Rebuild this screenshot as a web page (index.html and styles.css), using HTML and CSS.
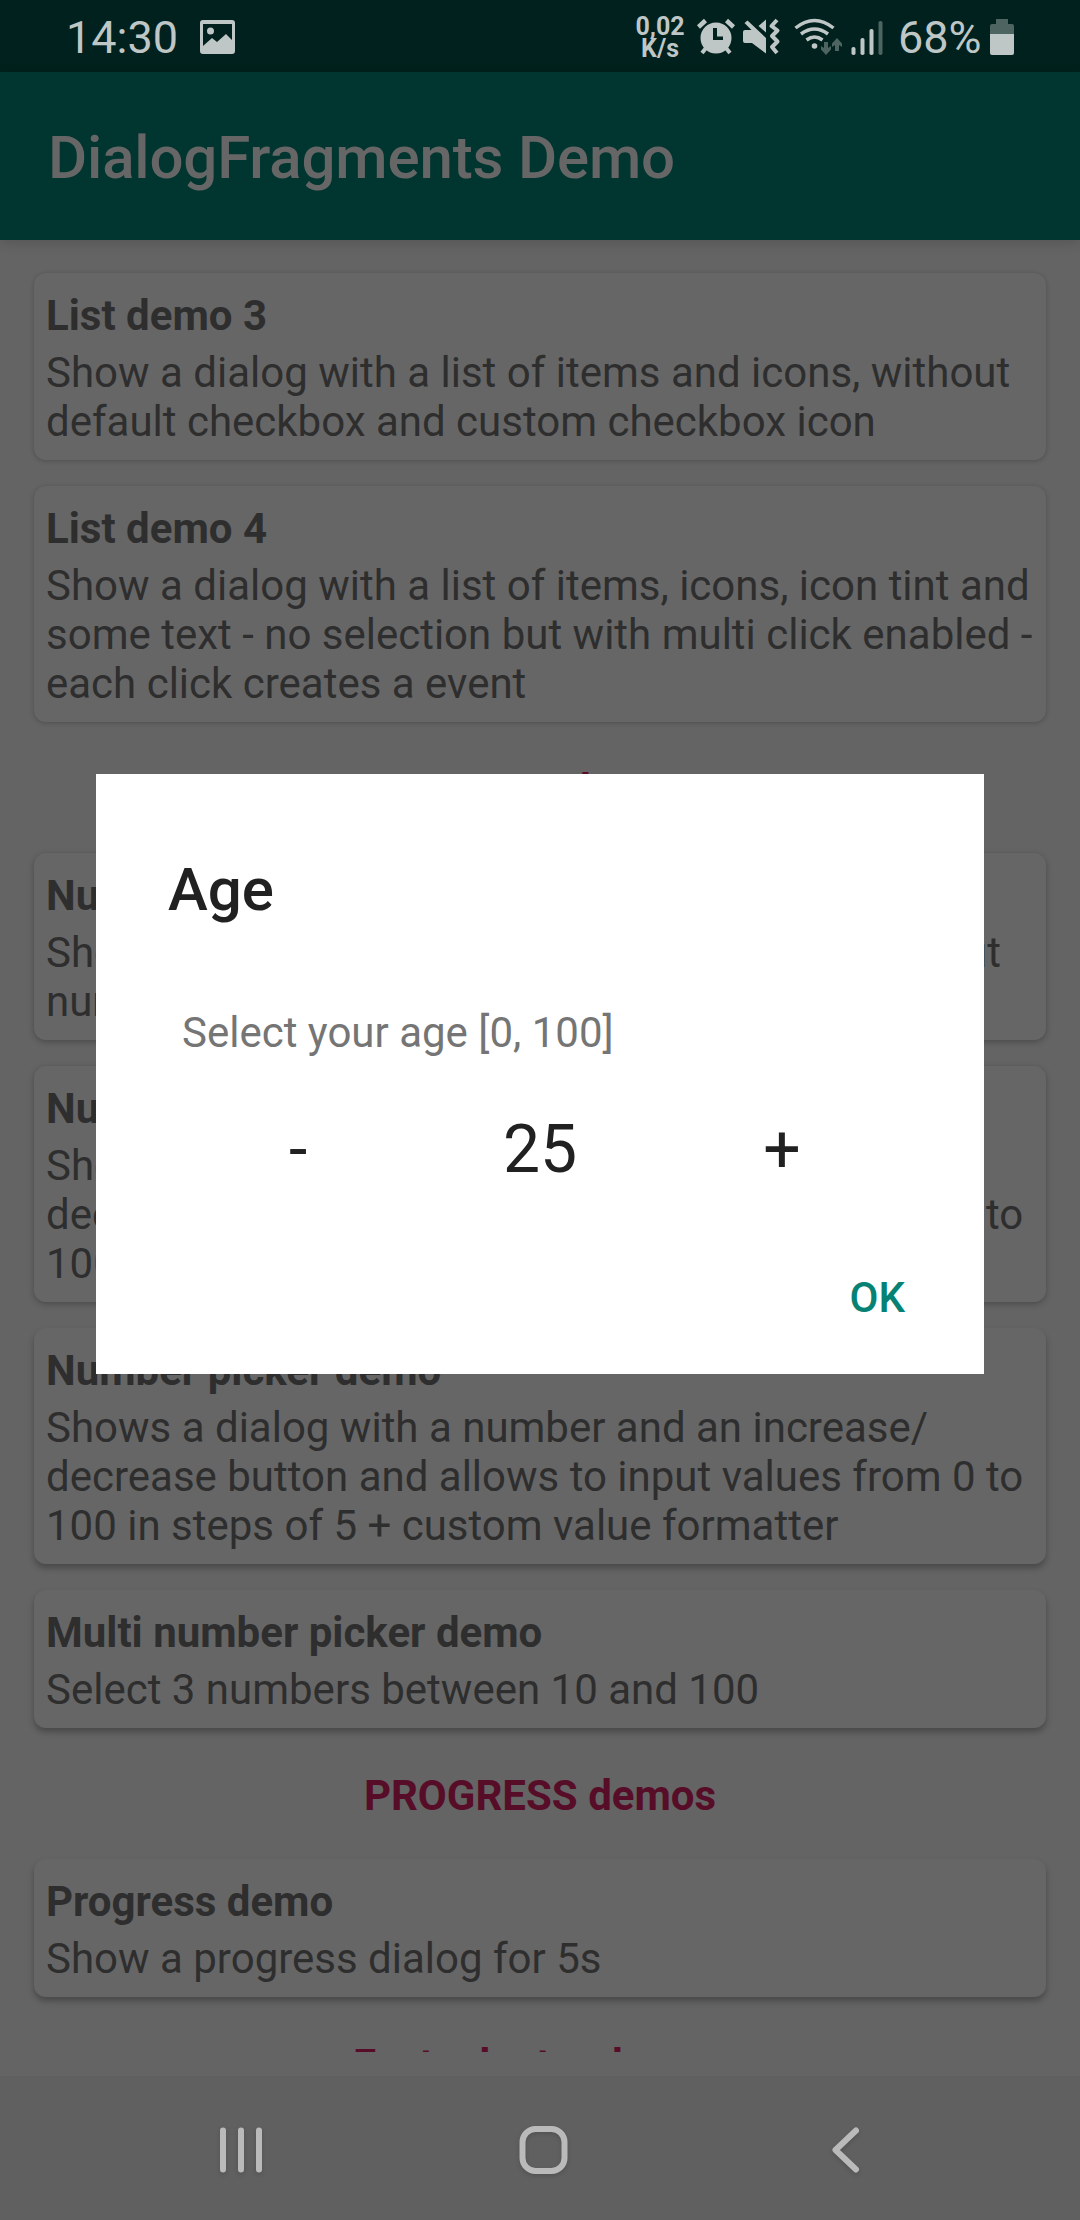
FILE: index.html
```html
<!DOCTYPE html>
<html lang="en">
<head>
<meta charset="utf-8">
<title>DialogFragments Demo</title>
<link rel="stylesheet" href="styles.css">
</head>
<body>
<div class="screen">
  <header class="status-bar">
    <div class="status-left">
      <span class="clock">14:30</span>
      <svg class="icon-picture" width="36" height="34" viewBox="0 0 36 34"><path fill="#bfc7c6" fill-rule="evenodd" d="M3 0H32Q35 0 35 3V31Q35 34 32 34H3Q0 34 0 31V3Q0 0 3 0ZM3 4V26L12 18L17 22L26 14L32 20V4ZM10.500 7.500a3.500 3.500 0 1 1 0 7a3.500 3.500 0 1 1 0-7Z"/></svg>
    </div>
    <div class="status-right">
      <div class="speed"><span>0,02</span><span>K/s</span></div>
      <svg class="icon-system" width="280" height="40" viewBox="690 16 280 40">
        <g fill="none" stroke="#bfc7c6">
          <path stroke-width="4.500" d="M698.500 27L705.500 20.500M733.500 27L726.500 20.500"/>
          <path stroke-width="4" d="M706 48L702 53M726 48L730 53"/>
          <path stroke-width="4" stroke-linejoin="round" d="M777 20L771.500 26L777.500 30.500L772 36L777.500 41.500L772 47L777 53"/>
          <path stroke-width="3.500" d="M795.500 28Q814.500 13 833.500 28M801 34Q814.500 24 828 34M806.500 40Q814.500 34 822.500 40"/>
        </g>
        <g fill="#bfc7c6">
          <path fill-rule="evenodd" d="M716 22.500a15.500 15.500 0 1 1 0 31a15.500 15.500 0 1 1 0-31ZM713 28V40H723V36.500H717V28Z"/>
          <path d="M744.500 23L747.500 20.500L766 38V53.500L752 43H745Q743 43 743 41V32Q743 30 745 30H751.500ZM766 19.500V32.500L758.500 26Z"/>
          <circle cx="814.500" cy="46" r="2.800"/>
          <rect x="851.500" y="47" width="4" height="8" rx="1.800"/>
          <rect x="860.500" y="38" width="4" height="17" rx="1.800"/>
          <rect x="869.500" y="29" width="4" height="26" rx="1.800"/>
        </g>
        <g fill="#4d6461">
          <rect x="878.500" y="21" width="4" height="34" rx="1.800"/>
          <path d="M824 42H828V48L831 46V49.500L826 55L821 49.500V46L824 48ZM835 51H839V45L842 47V43.500L837 38L832 43.500V47L835 45Z"/>
        </g>
      </svg>
      <span class="battery-level">68%</span>
      <svg class="icon-battery" width="24" height="36" viewBox="0 0 24 36"><path fill="#4d6461" d="M6 0H18V5H22Q24 5 24 7V15H0V7Q0 5 2 5H6Z"/><path fill="#bfc7c6" d="M0 15H24V34Q24 36 22 36H2Q0 36 0 34Z"/></svg>
    </div>
  </header>

  <div class="app-bar"><h1>DialogFragments Demo</h1></div>

  <main class="list">
    <article class="card high">
      <h2>List demo 3</h2>
      <p>Show a dialog with a list of items and icons, without<br>default checkbox and custom checkbox icon</p>
    </article>
    <article class="card high">
      <h2>List demo 4</h2>
      <p>Show a dialog with a list of items, icons, icon tint and<br>some text - no selection but with multi click enabled -<br>each click creates a event</p>
    </article>
    <h3 class="section">NUMBER demos</h3>
    <article class="card">
      <h2>Number demo</h2>
      <p class="tight">Shows a dialog with a input field and allows to input<br>numbers</p>
    </article>
    <article class="card">
      <h2>Number picker demo</h2>
      <p>Shows a dialog with a number and an increase/<br>decrease button and allows to input values from 0 to<br>100</p>
    </article>
    <article class="card low">
      <h2>Number picker demo</h2>
      <p>Shows a dialog with a number and an increase/<br>decrease button and allows to input values from 0 to<br>100 in steps of 5 + custom value formatter</p>
    </article>
    <article class="card low">
      <h2>Multi number picker demo</h2>
      <p>Select 3 numbers between 10 and 100</p>
    </article>
    <h3 class="section">PROGRESS demos</h3>
    <article class="card low">
      <h2>Progress demo</h2>
      <p>Show a progress dialog for 5s</p>
    </article>
    <h3 class="section">Fast adapter demos</h3>
  </main>

  <nav class="nav-bar">
    <svg class="nav-icon" width="56" height="56" viewBox="0 0 56 56"><path d="M9 8.500V47.500M27 8.500V47.500M45 8.500V47.500"/></svg>
    <svg class="nav-icon" width="56" height="56" viewBox="0 0 56 56"><rect x="6.500" y="7" width="42" height="42" rx="13"/></svg>
    <svg class="nav-icon" width="56" height="56" viewBox="0 0 56 56"><path d="M39 8.500L18.500 28L39 47.500"/></svg>
  </nav>

  <section class="dialog" role="dialog">
    <h2 class="dialog-title">Age</h2>
    <p class="dialog-text">Select your age [0, 100]</p>
    <div class="picker">
      <span class="step">-</span>
      <span>25</span>
      <span class="step">+</span>
    </div>
    <div class="actions"><span class="ok">OK</span></div>
  </section>
</div>
</body>
</html>
```
FILE: styles.css
```css
* { box-sizing: border-box; margin: 0; padding: 0; }

body { background: #646464; font-family: Roboto, sans-serif; }

svg { display: block; flex: none; }

.screen {
  position: relative;
  display: flex;
  flex-direction: column;
  width: 1080px;
  height: 2220px;
  overflow: hidden;
  background: #646464;
}

/* status bar */
.status-bar {
  display: flex;
  justify-content: space-between;
  height: 72px;
  padding: 0 66px 0 66px;
  background: #00211d;
  color: #bfc7c6;
  font-size: 45px;
  line-height: 54px;
}
.status-left, .status-right { display: flex; align-items: flex-start; }
.clock, .battery-level { padding-top: 11px; }
.icon-picture { margin: 20px 0 0 22px; }
.speed {
  display: flex;
  flex-direction: column;
  align-items: center;
  width: 48px;
  margin-right: 6px;
  padding-top: 16px;
  font-size: 25px;
  font-weight: 700;
  line-height: 22px;
}
.icon-system { margin: 16px -72px 0 0; }
.battery-level { width: 83px; }
.icon-battery { margin: 19px 0 0 9px; }

/* app bar */
.app-bar {
  position: relative;
  display: flex;
  align-items: center;
  height: 168px;
  padding: 4px 48px 0;
  background: #003530;
  box-shadow: 0 3px 12px rgba(0, 0, 0, .15);
  color: #666;
}
.app-bar h1 {
  font-size: 60px;
  font-weight: 500;
  line-height: 70px;
  letter-spacing: -.16px;
}

/* scrolling list, cut off above the bottom inset */
.list {
  height: 1812px;
  padding: 33px 34px 0;
  overflow: hidden;
  font-size: 42px;
  line-height: 49px;
  color: #2e2e2e;
}
.card {
  padding: 18px 12px 14px;
  border-radius: 12px;
  background: #666;
  box-shadow: 0 2px 6px rgba(0, 0, 0, .26);
  white-space: nowrap;
}
.card.high { box-shadow: 0 1px 5px rgba(0, 0, 0, .22); }
.card.low { box-shadow: 0 4px 6px rgba(0, 0, 0, .28); }
.card + .card { margin-top: 26px; }
.card h2 { margin-bottom: 8px; font-size: 42px; font-weight: 700; }
.card .tight { word-spacing: -.8px; }
.section {
  padding: 43px 0 39px;
  font-size: 42px;
  font-weight: 700;
  text-align: center;
  color: #570d27;
}

/* system navigation */
.nav-bar {
  display: flex;
  justify-content: space-between;
  height: 144px;
  margin-top: 24px;
  padding: 46px 207px 0 214px;
  background: #606060;
}
.nav-icon {
  fill: none;
  stroke: #bababa;
  stroke-width: 6;
  stroke-linecap: round;
  stroke-linejoin: round;
  filter: drop-shadow(0 2px 2px rgba(0, 0, 0, .15));
}

/* dialog over the dimmed page */
.dialog {
  position: absolute;
  top: 774px;
  left: 96px;
  width: 888px;
  height: 600px;
  padding: 81px 72px 0;
  background: #fff;
  color: #212121;
}
.dialog-title { font-size: 60px; font-weight: 500; line-height: 70px; }
.dialog-text {
  margin: 83px 0 0 14px;
  font-size: 42px;
  line-height: 49px;
  color: #757575;
}
.picker {
  display: flex;
  margin: 54px 9px 0;
  font-size: 66px;
  line-height: 78px;
  text-align: center;
}
.picker span { flex: 1; }
.actions {
  display: flex;
  justify-content: flex-end;
  margin-top: 84px;
  padding-right: 7px;
}
.ok { font-size: 42px; font-weight: 500; line-height: 49px; color: #068275; }
```
